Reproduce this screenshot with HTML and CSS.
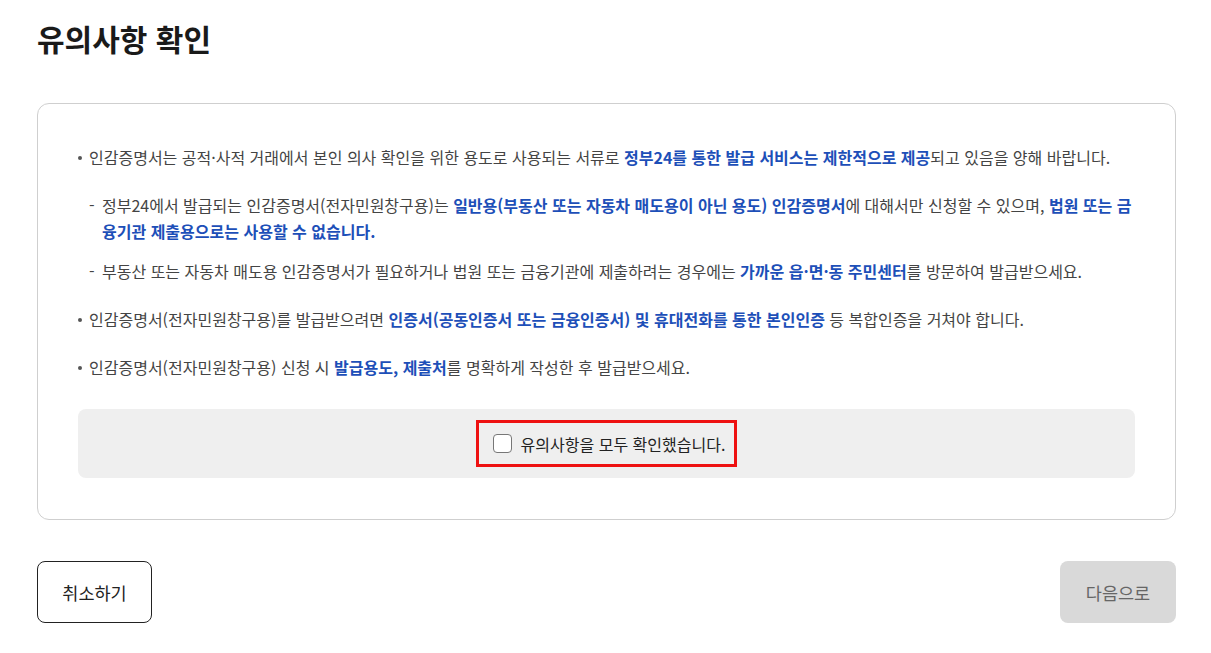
FILE: index.html
```html
<!DOCTYPE html>
<html lang="ko">
<head>
<meta charset="utf-8">
<link rel="stylesheet" href="styles.css">
</head>
<body>
<main class="page">
  <h1 class="title">유의사항 확인</h1>
  <section class="notice">
    <ul class="items">
      <li class="item">
        <p class="line">인감증명서는 공적·사적 거래에서 본인 의사 확인을 위한 용도로 사용되는 서류로 <b>정부24를 통한 발급 서비스는 제한적으로 제공</b>되고 있음을 양해 바랍니다.</p>
        <ul class="subs">
          <li class="sub">정부24에서 발급되는 인감증명서(전자민원창구용)는 <b>일반용(부동산 또는 자동차 매도용이 아닌 용도) 인감증명서</b>에 대해서만 신청할 수 있으며, <b>법원 또는 금융기관 제출용으로는 사용할 수 없습니다.</b></li>
          <li class="sub">부동산 또는 자동차 매도용 인감증명서가 필요하거나 법원 또는 금융기관에 제출하려는 경우에는 <b>가까운 읍·면·동 주민센터</b>를 방문하여 발급받으세요.</li>
        </ul>
      </li>
      <li class="item"><p class="line">인감증명서(전자민원창구용)를 발급받으려면 <b>인증서(공동인증서 또는 금융인증서) 및 휴대전화를 통한 본인인증</b> 등 복합인증을 거쳐야 합니다.</p></li>
      <li class="item"><p class="line">인감증명서(전자민원창구용) 신청 시 <b>발급용도, 제출처</b>를 명확하게 작성한 후 발급받으세요.</p></li>
    </ul>
    <div class="agree">
      <label class="agree-label">
        <input type="checkbox" class="check">
        <span>유의사항을 모두 확인했습니다.</span>
      </label>
    </div>
  </section>
  <div class="actions">
    <button class="btn btn-cancel">취소하기</button>
    <button class="btn btn-next" disabled>다음으로</button>
  </div>
</main>
</body>
</html>
```

FILE: styles.css
```css
* { box-sizing: border-box; }
html, body { margin: 0; padding: 0; background: #fff; }
body {
  font-family: "Noto Sans CJK KR", "Noto Sans", sans-serif;
  color: #222;
}
.page {
  padding: 15px 35px 0 37px;
}
.title {
  margin: 0;
  font-size: 30px;
  font-weight: 700;
  line-height: 46px;
  color: #1a1a1a;
}
.notice {
  margin-top: 42px;
  border: 1px solid #cfcfcf;
  border-radius: 12px;
  padding: 40px 40px 41px 40px;
}
.items {
  list-style: none;
  margin: 0;
  padding: 0;
}
.item {
  position: relative;
  padding-left: 11px;
  margin-bottom: 22px;
  font-size: 16px;
  line-height: 26px;
  color: #444;
}
.item:last-child { margin-bottom: 0; }
.item::before {
  content: "";
  position: absolute;
  left: 0;
  top: 12px;
  width: 4px;
  height: 4px;
  border-radius: 50%;
  background: #555;
}
.line { margin: 0; }
b { color: #1d4fb8; font-weight: 700; }
.subs {
  list-style: none;
  margin: 22px 0 5px 0;
  padding: 0;
}
.sub {
  position: relative;
  padding-left: 13px;
  margin-bottom: 14px;
}
.sub:last-child { margin-bottom: 0; }
.sub::before {
  content: "-";
  position: absolute;
  left: 0;
  top: 0;
}
.agree {
  margin-top: 29px;
  background: #efefef;
  border-radius: 8px;
  height: 69px;
  display: flex;
  align-items: center;
  justify-content: center;
}
.agree-label {
  display: flex;
  align-items: center;
  gap: 9px;
  border: 3px solid #ee1111;
  padding: 0 9px 0 14px;
  height: 47px;
  font-size: 16px;
  color: #222;
  cursor: pointer;
}
.check {
  appearance: none;
  -webkit-appearance: none;
  margin: 0;
  width: 19px;
  height: 19px;
  border: 1px solid #777;
  border-radius: 4px;
  background: #fff;
}
.actions {
  margin-top: 41px;
  display: flex;
  justify-content: space-between;
}
.btn {
  font-family: inherit;
  font-size: 17.5px;
  height: 62px;
  border-radius: 8px;
  padding: 0;
}
.btn-cancel {
  width: 115px;
  background: #fff;
  border: 1px solid #222;
  color: #222;
}
.btn-next {
  width: 116px;
  background: #d9d9d9;
  border: none;
  color: #666;
}
```
